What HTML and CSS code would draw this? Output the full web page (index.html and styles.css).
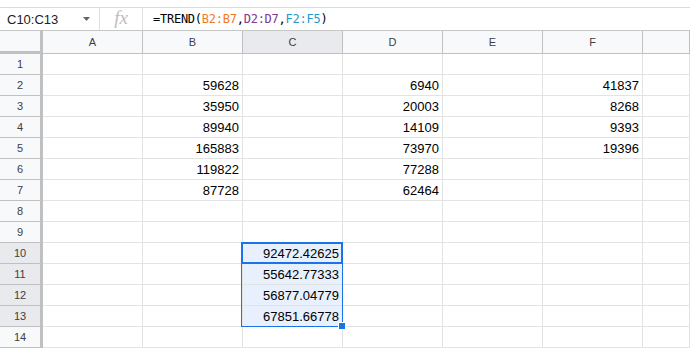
FILE: index.html
```html
<html>

<head>
	<link rel="stylesheet" href="styles.css">
</head>

<body>
	<div class="top-gap"></div>
	<div class="formula-bar">
		<div class="name-box">
			<span class="range-name">C10:C13</span>
			<svg class="drop-arrow" width="7" height="4" viewBox="0 0 7 4"><path d="M0,0 L7,0 L3.5,4 Z" fill="#666" /></svg>
		</div>
		<div class="fx-box"><span class="fx">fx</span></div>
		<div class="formula">=TREND(<span class="ref-b">B2:B7</span>,<span class="ref-d">D2:D7</span>,<span class="ref-f">F2:F5</span>)</div>
	</div>

	<div class="sheet">
		<div class="corner"></div>
		<div class="col-head">A</div>
		<div class="col-head">B</div>
		<div class="col-head active">C</div>
		<div class="col-head">D</div>
		<div class="col-head">E</div>
		<div class="col-head">F</div>
		<div class="col-head"></div>
	</div>

	<script>
		// data per row: [A, B, C, D, E, F]
		let rows = [
			['', '', '', '', '', ''],
			['', '59628', '', '6940', '', '41837'],
			['', '35950', '', '20003', '', '8268'],
			['', '89940', '', '14109', '', '9393'],
			['', '165883', '', '73970', '', '19396'],
			['', '119822', '', '77288', '', ''],
			['', '87728', '', '62464', '', ''],
			['', '', '', '', '', ''],
			['', '', '', '', '', ''],
			['', '', '92472.42625', '', '', ''],
			['', '', '55642.77333', '', '', ''],
			['', '', '56877.04779', '', '', ''],
			['', '', '67851.66778', '', '', ''],
			['', '', '', '', '', '']
		];

		let sheet = document.querySelector('.sheet');
		rows.forEach((row, i) => {
			let num = i + 1;
			let picked = num >= 10 && num <= 13;
			let head = document.createElement('div');
			head.className = picked ? 'row-head active' : 'row-head';
			head.textContent = num;
			sheet.appendChild(head);
			row.forEach((val, c) => {
				let cell = document.createElement('div');
				cell.className = 'cell';
				if (picked && c === 2) {
					cell.className += ' picked';
				}
				cell.textContent = val;
				// selection frame sits on the first cell of C10:C13
				if (num === 10 && c === 2) {
					cell.className += ' anchor';
					let frame = document.createElement('div');
					frame.className = 'selection';
					let handle = document.createElement('div');
					handle.className = 'fill-handle';
					frame.appendChild(handle);
					let active = document.createElement('div');
					active.className = 'active-cell';
					cell.appendChild(active);
					cell.appendChild(frame);
				}
				sheet.appendChild(cell);
			});
			let rest = document.createElement('div');
			rest.className = 'cell';
			sheet.appendChild(rest);
		});
	</script>
</body>

</html>
```

FILE: styles.css
```css
body {
	margin: 0;
	width: 690px;
	height: 349px;
	overflow: hidden;
	background: white;
	font-family: "Liberation Sans", Arial, sans-serif;
}

.top-gap {
	height: 7px;
	border-bottom: 1px solid #dadce0;
}

.formula-bar {
	display: flex;
	align-items: center;
	height: 22px;
	border-bottom: 1px solid #c4c7c5;
}

.name-box {
	display: flex;
	align-items: center;
	width: 100px;
	height: 100%;
	padding-left: 7px;
	box-sizing: border-box;
	border-right: 1px solid #e0e0e0;
}

.range-name {
	font-size: 13px;
	color: #202124;
	flex: 1;
}

.drop-arrow {
	margin-right: 9px;
}

.fx-box {
	width: 42px;
	height: 100%;
	display: flex;
	align-items: center;
	justify-content: center;
	border-right: 1px solid #e0e0e0;
}

.fx {
	font-family: "Liberation Serif", "Times New Roman", serif;
	font-style: italic;
	font-size: 19px;
	color: #bdbdbd;
	margin-top: -2px;
}

.formula {
	padding-left: 10px;
	font-family: "DejaVu Sans Mono", monospace;
	font-size: 12px;
	letter-spacing: -0.25px;
	color: #000;
}

.ref-b {
	color: #f07b1f;
}

.ref-d {
	color: #7e3794;
}

.ref-f {
	color: #1e9bcc;
}

.sheet {
	display: grid;
	grid-template-columns: 43px repeat(6, 100px) 1fr;
	grid-template-rows: 23px repeat(14, 21px);
}

.sheet > div {
	box-sizing: border-box;
}

.corner {
	background: #f8f9fa;
	border-right: 3px solid #c0c0c0;
	border-bottom: 3px solid #c0c0c0;
}

.col-head {
	background: #f8f9fa;
	border-right: 1px solid #c0c0c0;
	border-bottom: 1px solid #c0c0c0;
	font-size: 11px;
	color: #3c4043;
	text-align: center;
	line-height: 22px;
}

.row-head {
	background: #f8f9fa;
	border-right: 3px solid #c0c0c0;
	border-bottom: 1px solid #c0c0c0;
	font-size: 11px;
	color: #3c4043;
	text-align: center;
	line-height: 20px;
}

.col-head.active,
.row-head.active {
	background: #e8eaed;
}

.cell {
	border-right: 1px solid #e2e3e3;
	border-bottom: 1px solid #e2e3e3;
	font-size: 13px;
	color: #000;
	text-align: right;
	padding-right: 3px;
	line-height: 21px;
	white-space: nowrap;
	overflow: hidden;
}

.cell.picked {
	background: #e8f0fe;
}

.cell.anchor {
	position: relative;
	overflow: visible;
}

.selection {
	position: absolute;
	z-index: 2;
	left: -2px;
	top: -1px;
	width: 102px;
	height: 85px;
	box-sizing: border-box;
	border: 1px solid #1a73e8;
}

.active-cell {
	position: absolute;
	z-index: 2;
	left: -2px;
	top: -1px;
	width: 102px;
	height: 22px;
	box-sizing: border-box;
	border: 2px solid #1a73e8;
}

.fill-handle {
	position: absolute;
	right: -4px;
	bottom: -4px;
	width: 6px;
	height: 6px;
	background: #1a73e8;
	border: 1px solid white;
}
```
